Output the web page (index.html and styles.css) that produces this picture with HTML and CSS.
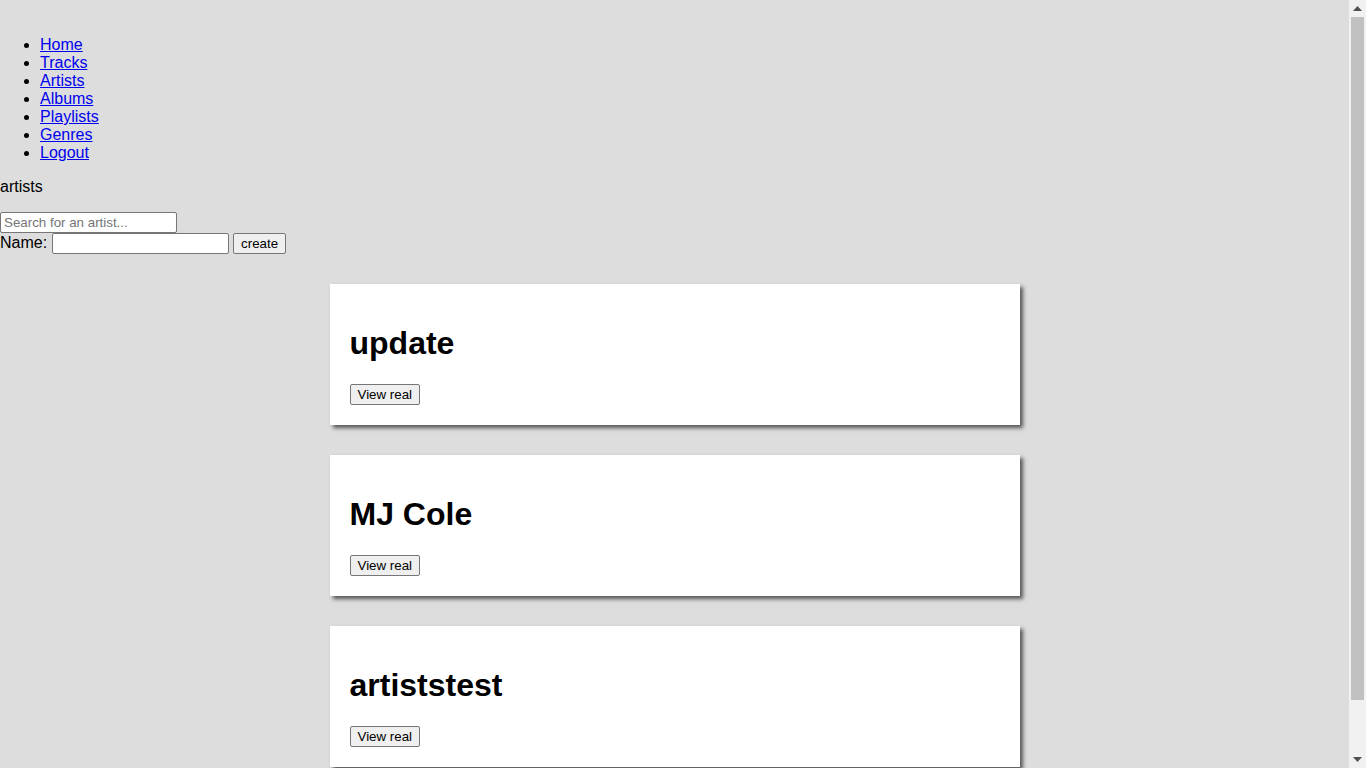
FILE: index.html
```html
<!DOCTYPE html>
<html>
<head>
<meta charset="utf-8">
<title>artists</title>
<link rel="stylesheet" href="styles.css">
</head>
<body>
<nav class="nav">
  <ul class="nav-list">
    <li><a href="#">Home</a></li>
    <li><a href="#">Tracks</a></li>
    <li><a href="#">Artists</a></li>
    <li><a href="#">Albums</a></li>
    <li><a href="#">Playlists</a></li>
    <li><a href="#">Genres</a></li>
    <li><a href="#">Logout</a></li>
  </ul>
</nav>
<p class="page-title">artists</p>
<div class="search-row"><input class="field" type="text" placeholder="Search for an artist..."></div>
<form class="create-row">Name: <input class="field" type="text"> <button class="btn" type="button">create</button></form>
<div class="card">
  <h1 class="card-title">update</h1>
  <button class="btn" type="button">View real</button>
</div>
<div class="card">
  <h1 class="card-title">MJ Cole</h1>
  <button class="btn" type="button">View real</button>
</div>
<div class="card">
  <h1 class="card-title">artiststest</h1>
  <button class="btn" type="button">View real</button>
</div>
<div class="fake-scrollbar" aria-hidden="true">
  <div class="sb-arrow sb-up"><svg width="9" height="5" viewBox="0 0 9 5"><path d="M0 5 L4.5 0 L9 5 Z" fill="#505050"/></svg></div>
  <div class="sb-track"><div class="sb-thumb"></div></div>
  <div class="sb-arrow sb-down"><svg width="9" height="5" viewBox="0 0 9 5"><path d="M0 0 L9 0 L4.5 5 Z" fill="#505050"/></svg></div>
</div>
</body>
</html>
```

FILE: styles.css
```css
html, body {
  margin: 0;
  padding: 0;
}
body {
  background: #dddddd;
  font-family: "Liberation Sans", Arial, sans-serif;
  font-size: 16px;
  color: #000;
  padding-right: 17px;
}
.nav {
  padding-top: 20px;
}
.nav-list {
  margin: 16px 0;
  padding-left: 40px;
}
.nav-list a {
  color: #0000ee;
}
.page-title {
  margin: 16px 0;
}
.field {
  font-family: "Liberation Sans", Arial, sans-serif;
  font-size: 13.333px;
  width: 177px;
  padding: 1px 3px;
  border: 1px solid #767676;
  border-radius: 2px;
  background: #fff;
  margin: 0;
  height: 21px;
  box-sizing: border-box;
}
.field::placeholder {
  color: #757575;
}
.create-row {
  margin: 0;
}
.btn {
  font-family: "Liberation Sans", Arial, sans-serif;
  font-size: 13.333px;
  padding: 1px 7px;
  border: 1px solid #767676;
  border-radius: 2px;
  background: #efefef;
  color: #000;
  height: 21px;
  box-sizing: border-box;
}
.card {
  width: 650px;
  padding: 20px;
  margin: 30px auto;
  background: #fff;
  box-shadow: 3px 3px 4px #555;
}
.card-title {
  font-size: 32px;
  font-weight: bold;
  margin: 21.44px 0;
  line-height: 37px;
}
.fake-scrollbar {
  position: fixed;
  top: 0;
  right: 0;
  width: 17px;
  height: 100vh;
  background: #f1f1f1;
  display: flex;
  flex-direction: column;
}
.sb-arrow {
  height: 17px;
  display: flex;
  align-items: center;
  justify-content: center;
}
.sb-track {
  flex: 1;
  padding: 0 2px;
}
.sb-thumb {
  height: 683px;
  background: #c1c1c1;
}
```
